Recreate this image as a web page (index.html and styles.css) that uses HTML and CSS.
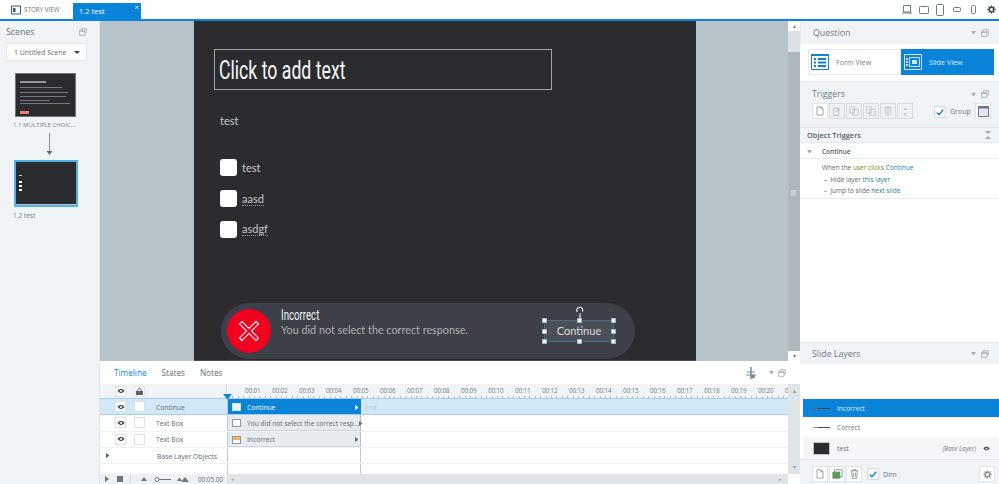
FILE: index.html
```html
<!DOCTYPE html>
<html lang="en">
<head>
<meta charset="utf-8">
<title>Story</title>
<link rel="stylesheet" href="styles.css">
</head>
<body>
<svg class="defs" width="0" height="0">
  <defs>
    <symbol id="float" viewBox="0 0 10 10"><path d="M3 2.500V.8h6.200v5.400H7.500M.8 2.800h6.700v6.400H.8zM.8 4.400h6.700" fill="none" stroke="currentColor"/></symbol>
    <symbol id="page" viewBox="0 0 12 14"><path d="M1.500.8h6l3 3v9.400h-9zM7.500.8v3h3" fill="none" stroke="currentColor"/></symbol>
    <symbol id="eye" viewBox="0 0 12 8"><path d="M.5 4Q6-2.500 11.500 4 6 10.500.5 4z" fill="currentColor"/><circle cx="6" cy="4" r="1.500" fill="#fff"/></symbol>
    <symbol id="trash" viewBox="0 0 12 14"><path d="M.5 2.500h11M4 2.500V1h4v1.500M2 3l.8 10h6.400L10 3M4.700 5v6M7.300 5v6" fill="none" stroke="currentColor"/></symbol>
    <symbol id="copy" viewBox="0 0 14 14"><path d="M1 1h6.500v9H1zM5 4.500h8V13H5z" fill="none" stroke="currentColor"/></symbol>
    <symbol id="gear" viewBox="0 0 12 12"><circle cx="6" cy="6" r="3" fill="none" stroke="currentColor" stroke-width="2"/><path d="M6 .5v2M6 9.500v2M.5 6h2M9.500 6h2M2.100 2.100l1.400 1.400M8.500 8.500l1.400 1.400M2.100 9.900l1.400-1.400M8.500 3.500l1.400-1.400" stroke="currentColor" stroke-width="1.700"/></symbol>
  </defs>
</svg>

<header class="topbar">
  <div class="tab-story">
    <svg class="tab-icon" viewBox="0 0 10 10"><path d="M.5 1h9v8h-9z" fill="#fff" stroke="#3d5a73"/><path d="M2 3h2.500v4H2z" fill="#3d5a73"/></svg>
    <span>STORY VIEW</span>
  </div>
  <div class="tab-active"><span>1.2 test</span><i class="tab-x">×</i></div>
  <div class="device-icons">
    <svg class="dev" width="10" height="9" viewBox="0 0 10 9"><path d="M1.500.5h7v6.500h-7zM0 8h10" fill="none" stroke="currentColor"/></svg>
    <svg class="dev" width="10" height="8" viewBox="0 0 10 8"><rect x=".5" y=".5" width="9" height="7" rx="1" fill="none" stroke="currentColor"/></svg>
    <svg class="dev" width="8" height="12" viewBox="0 0 8 12"><rect x=".5" y=".5" width="7" height="11" rx="1" fill="none" stroke="currentColor"/></svg>
    <svg class="dev gap9" width="8" height="5" viewBox="0 0 8 5"><rect x=".5" y=".5" width="7" height="4" rx="1" fill="none" stroke="currentColor"/></svg>
    <svg class="dev gap10" width="5" height="9" viewBox="0 0 5 9"><rect x=".5" y=".5" width="4" height="8" rx="1" fill="none" stroke="currentColor"/></svg>
    <svg class="dev gear-top" width="9" height="9"><use href="#gear"/></svg>
  </div>
</header>

<main class="workspace">
  <aside class="scenes">
    <div class="scenes-head"><span>Scenes</span><svg class="float" width="8" height="8"><use href="#float"/></svg></div>
    <div class="scene-select"><span>1 Untitled Scene</span><i class="caret"></i></div>
    <div class="thumb thumb-a">
      <i class="t-line t1"></i><i class="t-line t2"></i><i class="t-line t3"></i><i class="t-line t4"></i><i class="t-line t5"></i><i class="t-line t6"></i><i class="t-red"></i>
    </div>
    <div class="thumb-label">1.1 MULTIPLE CHOIC...</div>
    <svg class="thumb-arrow" width="7" height="22" viewBox="0 0 7 22"><path d="M3.500 0v19" stroke="#8a969b"/><path d="M.5 18h6l-3 4z" fill="#5e6a6f"/></svg>
    <div class="thumb-sel">
      <div class="thumb thumb-b"><i class="t-dot d0"></i><i class="t-box b1"></i><i class="t-box b2"></i><i class="t-box b3"></i></div>
    </div>
    <div class="thumb-label">1.2 test</div>
  </aside>

  <section class="center">
    <div class="stage-row">
      <div class="stage">
        <div class="slide">
          <div class="title-box"><span class="narrow">Click to add text</span></div>
          <div class="slide-text q-text">test</div>
          <div class="check c1"></div><div class="slide-text l1">test</div>
          <div class="check c2"></div><div class="slide-text l2 squiggle">aasd</div>
          <div class="check c3"></div><div class="slide-text l3 squiggle">asdgf</div>
          <div class="banner">
            <div class="red-circle">
              <svg width="22" height="22" viewBox="0 0 22 22"><path d="M4 1.500 11 8.500l7-7L20.500 4l-7 7 7 7-2.500 2.500-7-7-7 7L1.500 18l7-7-7-7z" fill="#f2001f" stroke="#fff" stroke-width="1.300" stroke-dasharray="2 .4"/></svg>
            </div>
            <div class="banner-text">
              <div class="banner-title">Incorrect</div>
              <div class="banner-sub">You did not select the correct response.</div>
            </div>
            <div class="cont-btn">Continue
              <i class="h h1"></i><i class="h h2"></i><i class="h h3"></i><i class="h h4"></i><i class="h h5"></i><i class="h h6"></i><i class="h h7"></i><i class="h h8"></i>
              <svg class="rotate" width="10" height="12" viewBox="0 0 10 12"><path d="M5 12V7.500M2.300 6A3 3 0 1 1 7.500 5.500" fill="none" stroke="#fff" stroke-width="1.100"/></svg>
            </div>
          </div>
        </div>
      </div>
      <div class="vscroll">
        <div class="arrow-cell">▴</div>
        <div class="vthumb"></div>
        <div class="vmid"><i class="grip"></i></div>
        <div class="arrow-cell">▾</div>
      </div>
    </div>

    <div class="timeline">
      <div class="tl-tabs">
        <span class="tl-tab on">Timeline</span><span class="tl-tab">States</span><span class="tl-tab">Notes</span>
        <span class="tl-tools">
          <svg width="12" height="12" viewBox="0 0 12 12"><path d="M6 0v12" stroke="#3f6f9c" stroke-width="1.200"/><path d="M2 5h8M1 8h10" stroke="#7c8a94"/><circle cx="8" cy="9.500" r="2" fill="#7c8a94"/></svg>
          <i class="tool-caret"></i>
          <svg class="float" width="8" height="8"><use href="#float"/></svg>
        </span>
      </div>
      <div class="tl-body">
        <div class="tl-main">
          <div class="tl-ruler">
            <div class="ruler-left">
              <span class="cellbtn"><svg width="8" height="6"><use href="#eye"/></svg></span>
              <span class="cellbtn lockbtn"><svg width="7" height="7" viewBox="0 0 7 7"><path d="M0 3h7v4H0z" fill="#5a6266"/><path d="M1.800 3V1.700Q1.800.5 3.500.5T5.200 1.700V3" fill="none" stroke="#5a6266"/></svg></span>
            </div>
            <div class="ruler-scale">
              <span>00:01</span><span>00:02</span><span>00:03</span><span>00:04</span><span>00:05</span><span>00:06</span><span>00:07</span><span>00:08</span><span>00:09</span><span>00:10</span><span>00:11</span><span>00:12</span><span>00:13</span><span>00:14</span><span>00:15</span><span>00:16</span><span>00:17</span><span>00:18</span><span>00:19</span><span>00:20</span><span class="clip">0</span>
            </div>
            <i class="playhead"></i>
          </div>
          <div class="tl-row sel">
            <div class="row-left"><span class="cellbtn"><svg width="8" height="6"><use href="#eye"/></svg></span><span class="cellbox"></span><span class="row-name">Continue</span></div>
            <div class="row-track"><div class="block on"><i class="blk-ico ico-btn"></i><span>Continue</span><i class="blk-arrow"></i></div><span class="end">End</span></div>
          </div>
          <div class="tl-row">
            <div class="row-left"><span class="cellbtn"><svg width="8" height="6"><use href="#eye"/></svg></span><span class="cellbox"></span><span class="row-name">Text Box</span></div>
            <div class="row-track"><div class="block"><i class="blk-ico ico-txt"></i><span>You did not select the correct resp...</span><i class="blk-arrow"></i></div></div>
          </div>
          <div class="tl-row">
            <div class="row-left"><span class="cellbtn"><svg width="8" height="6"><use href="#eye"/></svg></span><span class="cellbox"></span><span class="row-name">Text Box</span></div>
            <div class="row-track"><div class="block"><i class="blk-ico ico-box"></i><span>Incorrect</span><i class="blk-arrow"></i></div></div>
          </div>
          <div class="tl-row base">
            <div class="row-left"><i class="base-arrow"></i><span class="row-name">Base Layer Objects</span></div>
            <div class="row-track"><div class="block-fill"></div></div>
          </div>
          <div class="tl-spacer">
            <div class="spacer-left"></div>
            <div class="row-track"><div class="block-fill"></div></div>
          </div>
          <div class="tl-foot">
            <div class="foot-left">
              <i class="play"></i><i class="stop"></i><i class="sep"></i>
              <i class="mtn m1"></i>
              <svg class="slider" width="17" height="5" viewBox="0 0 17 5"><path d="M5 2.500h12" stroke="#6d777c"/><circle cx="3" cy="2.500" r="2" fill="#fff" stroke="#6d777c"/></svg>
              <i class="mtn m2"></i><i class="mtn m3"></i>
              <span class="foot-time">00:05.00</span>
            </div>
            <div class="foot-scroll"><i class="f-l">◂</i><i class="f-r">▸</i></div>
          </div>
        </div>
        <div class="tl-vscroll"><span>▴</span><span>▾</span></div>
      </div>
    </div>
  </section>

  <aside class="props">
    <div class="p-head q-head"><span>Question</span><i class="tool-caret"></i><svg class="float" width="8" height="8"><use href="#float"/></svg></div>
    <div class="views">
      <div class="view-btn">
        <svg width="18" height="16" viewBox="0 0 18 16"><path d="M.5.5h17v15H.5z" fill="#fff" stroke="#0a84d8"/><path d="M0 0h18v2H0zM3 4h2v2H3zM7 4h8v2H7zM3 7.500h2v2H3zM7 7.500h8v2H7zM3 11h2v2H3zM7 11h8v2H7z" fill="#0a84d8"/></svg>
        <span>Form View</span>
      </div>
      <div class="view-btn on">
        <svg width="18" height="16" viewBox="0 0 18 16"><path d="M.5.5h17v15H.5zM5.500 3.500h10v9h-10z" fill="none" stroke="#cfe7f8"/><path d="M2 4h2v2H2zM2 7h2v2H2zM2 10h2v2H2zM8 6h5v4H8z" fill="#cfe7f8"/></svg>
        <span>Slide View</span>
      </div>
    </div>
    <div class="p-head t-head"><span>Triggers</span><i class="tool-caret"></i><svg class="float" width="8" height="8"><use href="#float"/></svg></div>
    <div class="trig-tools">
      <span class="ibtn"><svg width="8" height="10"><use href="#page"/></svg></span>
      <span class="ibtn dis"><svg width="8" height="9" viewBox="0 0 9 10"><path d="M.5 1.500h6v8h-6zM3 6l4.500-5" fill="none" stroke="currentColor"/></svg></span>
      <span class="ibtn dis"><svg width="10" height="10"><use href="#copy"/></svg></span>
      <span class="ibtn dis"><svg width="10" height="10"><use href="#copy"/></svg></span>
      <span class="ibtn dis"><svg width="8" height="10"><use href="#trash"/></svg></span>
      <span class="ibtn dis updown"><i>▴</i><i>▾</i></span>
      <span class="check-small"><svg width="8" height="7" viewBox="0 0 8 7"><path d="M.8 3.500 3 5.800 7.200.8" fill="none" stroke="#0a84d8" stroke-width="1.400"/></svg></span>
      <span class="group-label">Group</span>
      <span class="ibtn var"><svg width="11" height="11" viewBox="0 0 11 11"><path d="M.5.5h10v10H.500z" fill="#dfe8f0" stroke="#6b7780"/><path d="M0 0h11v2.500H0z" fill="#6b7780"/></svg></span>
    </div>
    <div class="ot-head"><span>Object Triggers</span><svg width="6" height="8" viewBox="0 0 6 8"><path d="M0 0h6L3 3zM0 8h6L3 5z" fill="#a0aaaf"/></svg></div>
    <div class="ot-group"><i class="tool-caret"></i><span>Continue</span></div>
    <div class="ot-list">
      <div class="ot-line">When the <span class="k-o">user</span> <span class="k-o">clicks</span> <span class="k-b">Continue</span></div>
      <div class="ot-line sub"><i>–</i><span>Hide layer <span class="k-b">this layer</span></span></div>
      <div class="ot-line sub"><i>–</i><span>Jump to slide <span class="k-b">next slide</span></span></div>
    </div>
    <div class="p-fill"></div>
    <div class="p-head l-head"><span>Slide Layers</span><i class="tool-caret"></i><svg class="float" width="8" height="8"><use href="#float"/></svg></div>
    <div class="l-blank"></div>
    <div class="layer on"><i class="ln red"></i><span>Incorrect</span></div>
    <div class="layer second"><i class="ln green"></i><span>Correct</span></div>
    <div class="layer base-layer"><i class="mini"></i><span>test</span><em>(Base Layer)</em><svg width="7" height="5"><use href="#eye"/></svg></div>
    <div class="l-tools">
      <span class="ibtn"><svg width="8" height="10"><use href="#page"/></svg></span>
      <span class="ibtn dup"><svg width="11" height="10" viewBox="0 0 14 13"><path d="M3 1h10v9H3z" fill="none" stroke="#6b7780"/><path d="M1 4h9v8H1z" fill="#55a54a" stroke="#6b7780"/></svg></span>
      <span class="ibtn"><svg width="9" height="10"><use href="#trash"/></svg></span>
      <span class="check-small"><svg width="8" height="7" viewBox="0 0 8 7"><path d="M.8 3.500 3 5.800 7.200.8" fill="none" stroke="#0a84d8" stroke-width="1.400"/></svg></span>
      <span class="dim-label">Dim</span>
      <span class="ibtn gear-btn"><svg width="9" height="9"><use href="#gear"/></svg></span>
    </div>
  </aside>
</main>
</body>
</html>
```

FILE: styles.css
```css
* { box-sizing: border-box; }
html, body { margin: 0; height: 100%; overflow: hidden; }
body {
  width: 999px; height: 484px; display: flex; flex-direction: column;
  font-family: "Open Sans", "Noto Sans", sans-serif; font-size: 7px; color: #5d676c; background: #fff;
}
i { font-style: normal; display: block; }
.defs { position: absolute; }

/* top bar */
.topbar { height: 21px; flex: none; display: flex; align-items: stretch; border-bottom: 2px solid #0a84d8; background: #fff; }
.tab-story { width: 73px; padding-left: 11px; display: flex; align-items: center; gap: 3px; font-size: 6.300px; color: #6c767b; }
.tab-icon { width: 10px; height: 10px; }
.tab-active { width: 68px; position: relative; background: #0a84d8; color: #fff; display: flex; align-items: center; padding-left: 6px; font-size: 7.500px; margin-top: 3px; }
.tab-x { position: absolute; right: 2px; top: -2px; font-size: 8px; color: #dceefb; }
.device-icons { margin-left: auto; display: flex; align-items: center; gap: 7px; padding-right: 3px; color: #6f7a80; }
.dev { flex: none; }
.gap9 { margin-left: 2px; }
.gap10 { margin-left: 3px; }
.gear-top { color: #3d4a52; margin-left: 4px; }

.workspace { flex: 1; display: flex; min-height: 0; }

/* scenes */
.scenes { width: 100px; flex: none; background: #f1f4f7; border-right: 1px solid #dfe4e8; padding: 0 6px; display: flex; flex-direction: column; }
.scenes-head { height: 21px; display: flex; align-items: center; justify-content: space-between; font-size: 8.800px; color: #66737a; padding-right: 6px; }
.float { color: #a2acb1; flex: none; }
.scene-select { width: 81px; height: 18px; background: #fff; border: 1px solid #e2e6e9; display: flex; align-items: center; justify-content: space-between; padding: 0 6px 0 7px; color: #626d72; font-size: 6.900px; margin-top: 1px; }
.caret { width: 6px; height: 0; border: 3px solid transparent; border-top: 3px solid #3f474b; border-bottom: 0; }
.thumb { background: #2b2c30; position: relative; }
.thumb-a { width: 61px; height: 44px; margin: 12px 0 0 9px; border: 1px solid #6f7478; flex: none; }
.t-line { position: absolute; height: 1px; background: #aab; opacity: .6; }
.t1 { left: 4px; top: 7px; width: 26px; height: 2px; background: #ddd; }
.t2 { left: 4px; top: 13px; width: 42px; }
.t3 { left: 4px; top: 18px; width: 48px; }
.t4 { left: 4px; top: 22px; width: 46px; }
.t5 { left: 4px; top: 26px; width: 30px; }
.t6 { left: 4px; top: 29px; width: 50px; }
.t-red { position: absolute; left: 4px; top: 37px; width: 9px; height: 3px; background: #f47a75; }
.thumb-label { font-size: 6px; line-height: 10px; color: #757f84; margin: 3px 0 0 7px; white-space: nowrap; }
.thumb-arrow { margin: 3px 0 0 40px; flex: none; }
.thumb-sel { width: 64px; height: 47px; margin: 5px 0 0 8px; border: 2px solid #4fb3ea; background: #bfc4c7; padding: 0 0 1px; flex: none; }
.thumb-sel + .thumb-label { margin-top: 4px; font-size: 6.500px; }
.thumb-b { width: 100%; height: 100%; }
.t-dot { position: absolute; left: 3px; top: 13px; width: 3px; height: 1px; background: #ccc; }
.t-box { position: absolute; left: 3px; width: 3px; height: 2px; background: #fff; }
.b1 { top: 19px; } .b2 { top: 23px; } .b3 { top: 27px; }

/* center */
.center { width: 700px; flex: none; display: flex; flex-direction: column; }
.stage-row { height: 340px; flex: none; display: flex; }
.stage { width: 688px; flex: none; background: #b7c2c9; padding-left: 94px; }
.slide { width: 502px; height: 340px; background: #2b2c30; border-bottom: 1px solid #4a4f55; position: relative; font-family: Lato, sans-serif; }
.title-box { position: absolute; left: 20px; top: 28px; width: 338px; height: 41px; border: 1px solid #a4a6a8; color: #f8f8f8; font-family: Roboto, sans-serif; font-size: 26px; line-height: 40px; padding-left: 4px; }
.narrow { display: inline-block; transform: scaleX(.68); transform-origin: left center; white-space: nowrap; }
.slide-text { position: absolute; font-size: 11px; color: #c9c9cb; line-height: 15px; }
.q-text { left: 26px; top: 92px; }
.check { position: absolute; left: 26px; width: 17px; height: 17px; background: #fff; border-radius: 3px; }
.c1 { top: 138px; } .c2 { top: 169px; } .c3 { top: 200px; }
.l1 { left: 48px; top: 139px; } .l2 { left: 48px; top: 171px; } .l3 { left: 48px; top: 201px; }
.squiggle { border-bottom: 1px dotted #9a9a9a; line-height: 13px; }
.banner { position: absolute; left: 27px; top: 282px; width: 414px; height: 56px; background: #3d4048; border-radius: 28px; display: flex; align-items: flex-start; }
.red-circle { width: 44px; height: 44px; margin: 6px 0 0 6px; border-radius: 50%; background: #f2001f; display: flex; align-items: center; justify-content: center; flex: none; }
.banner-text { margin: 4px 0 0 10px; width: 263px; flex: none; }
.banner-title { font-family: Roboto, sans-serif; font-size: 14px; color: #f2f2f2; line-height: 16px; transform: scaleX(.69); transform-origin: left center; white-space: nowrap; }
.banner-sub { font-size: 10.800px; color: #aeb0b3; line-height: 14px; }
.cont-btn { position: relative; width: 70px; height: 22px; margin-top: 17px; background: #4b4f58; border: 1px solid #4a6d85; color: #dcdcdc; font-size: 11px; text-align: center; line-height: 20px; flex: none; }
.h { position: absolute; width: 5px; height: 5px; background: #fff; border: 1px solid #9fb2bf; }
.h1 { left: -3px; top: -3px; } .h2 { left: 32px; top: -3px; } .h3 { right: -3px; top: -3px; }
.h4 { left: -3px; top: 8px; } .h5 { right: -3px; top: 8px; }
.h6 { left: -3px; bottom: -3px; } .h7 { left: 32px; bottom: -3px; } .h8 { right: -3px; bottom: -3px; }
.rotate { position: absolute; left: 30px; top: -15px; }

.vscroll { width: 12px; flex: none; background: #aeb7bc; display: flex; flex-direction: column; }
.arrow-cell { height: 10px; background: #fff; color: #7a8388; font-size: 6px; line-height: 10px; text-align: center; flex: none; }
.vthumb { height: 21px; background: #dbe1e4; flex: none; }
.vmid { flex: 1; position: relative; }
.grip { position: absolute; left: 3px; top: 138px; width: 5px; height: 6px; background: #c9d0d4; }

/* timeline */
.timeline { flex: 1; display: flex; flex-direction: column; background: #fff; min-height: 0; }
.tl-tabs { height: 23px; flex: none; display: flex; align-items: center; padding-left: 14px; gap: 15px; font-size: 8.200px; color: #626d72; padding-right: 14px; }
.tl-tab.on { color: #0a84d8; }
.tl-tools { margin-left: auto; display: flex; align-items: center; gap: 12px; }
.tool-caret { width: 5px; height: 0; border: 2.500px solid transparent; border-top: 3px solid #a4aeb3; border-bottom: 0; flex: none; }
.tl-tools .tool-caret { margin-right: -8px; }
.tl-body { flex: 1; display: flex; min-height: 0; }
.tl-main { width: 688px; flex: none; display: flex; flex-direction: column; }
.tl-ruler { height: 15px; flex: none; display: flex; position: relative; background: #f1f4f7; border-bottom: 1px solid #a9cde6; }
.ruler-left { width: 127px; flex: none; display: flex; align-items: center; padding-left: 15px; gap: 8px; border-right: 1px solid #d5dadd; }
.cellbtn { width: 11px; height: 11px; background: #fff; border: 1px solid #dde2e5; color: #4d565b; display: flex; align-items: center; justify-content: center; flex: none; }
.ruler-scale { flex: 1; display: flex; overflow: hidden; font-size: 6.300px; color: #747e83; padding-left: 18px;
  background: repeating-linear-gradient(90deg, #b6bdc1 0 1px, transparent 1px 5.400px) 0 100% / 100% 2px no-repeat; }
.ruler-scale span { width: 27px; flex: none; text-align: left; line-height: 14px; letter-spacing: -.1px; }
.ruler-scale .clip { width: 3px; }
.playhead { position: absolute; left: 122.500px; bottom: -1px; width: 9px; height: 0; border: 4.500px solid transparent; border-top: 5px solid #0a84d8; border-bottom: 0; }
.tl-row { height: 16.300px; flex: none; display: flex; border-bottom: 1px solid #f0f2f4; }
.row-left { width: 127px; flex: none; display: flex; align-items: center; padding-left: 15px; }
.row-left .cellbox { width: 11px; height: 11px; background: #fff; border: 1px solid #dde2e5; margin-left: 8px; flex: none; }
.row-name { margin-left: 11px; padding-top: 1px; color: #626d72; font-size: 6.800px; white-space: nowrap; }
.tl-row.sel { background: #d3e8f7; border-bottom: 1px solid #a9cde6; }
.tl-row.base .row-name { margin-left: 48px; }
.base-arrow { margin-left: -9px; width: 3px; border: 2.500px solid transparent; border-left: 3px solid #5b6468; border-right: 0; height: 5px; }
.row-track { flex: 1; position: relative; display: flex; align-items: stretch; }
.block { width: 134px; background: #e6ebef; border-left: 1px solid #a6d0ee; border-right: 1px solid #b5bec3; display: flex; align-items: center; padding: 1px 2px 0 4px; color: #5f6a6f; font-size: 6.700px; white-space: nowrap; box-shadow: inset 0 -1px #cfd6da; }
.block.on { background: #0a84d8; color: #fff; box-shadow: none; border-right-color: #0a84d8; }
.block span { flex: 1; margin-left: 6px; }
.blk-ico { width: 9px; height: 8px; flex: none; border: 1px solid #8a979e; background: #fff; }
.block.on .blk-ico { border-color: #cfe7f8; background: #eaf5fc; }
.ico-box { background: linear-gradient(#f4b25a 0 3px, #fff 3px); }
.blk-arrow { width: 3px; height: 5px; border: 2.500px solid transparent; border-left: 3px solid #6a7479; border-right: 0; flex: none; }
.block.on .blk-arrow { border-left-color: #fff; }
.end { color: #b3cbdb; font-size: 6.500px; margin: 1px 0 0 4px; align-self: center; }
.block-fill { width: 134px; border-left: 1px solid #a6d0ee; border-right: 1px solid #c3cbcf; }
.tl-spacer { flex: 1; display: flex; min-height: 0; }
.spacer-left { width: 127px; flex: none; }
.tl-foot { height: 10px; flex: none; display: flex; background: #eef1f3; }
.foot-left { width: 127px; flex: none; display: flex; align-items: center; padding-left: 5px; color: #626d72; font-size: 6.300px; }
.play { width: 4px; height: 6px; border: 3px solid transparent; border-left: 4px solid #6d777c; border-right: 0; }
.stop { width: 6px; height: 6px; background: #6d777c; margin-left: 8px; }
.sep { width: 1px; height: 8px; background: #d3d9dc; margin-left: 7px; }
.mtn { width: 6px; height: 4px; border: 3px solid transparent; border-bottom: 4px solid #6d777c; border-top: 0; }
.m1 { margin-left: 10px; }
.slider { margin-left: 7px; flex: none; }
.m2 { width: 5px; height: 3px; border-width: 0 2.500px 3px; margin-left: 6px; }
.m3 { width: 8px; height: 5px; border-width: 0 4px 5px; margin-left: -1px; }
.foot-time { margin-left: 9px; white-space: nowrap; }
.foot-scroll { flex: 1; background: #e1e5e8; display: flex; justify-content: space-between; padding: 0 6px 0 4px; color: #9aa3a8; font-size: 5px; line-height: 10px; }
.tl-vscroll { width: 12px; flex: none; background: #dfe4e7; display: flex; flex-direction: column; justify-content: space-between; align-items: center; color: #8a9499; font-size: 6px; padding: 3px 0; margin-bottom: 10px; }

/* right panel */
.props { flex: 1; min-width: 0; background: #fff; display: flex; flex-direction: column; }
.p-head { display: flex; align-items: center; font-size: 8.800px; color: #6e7a80; background: #f1f4f7; padding: 0 10px 0 12px; flex: none; }
.p-head span { flex: 1; }
.p-head .tool-caret { margin-right: 5px; }
.q-head { height: 23px; border-left: 1px solid #e8ecef; }
.views { display: flex; height: 37px; padding: 5px 5px 6px 8px; flex: none; background: #fff; }
.view-btn { width: 93px; height: 26px; display: flex; align-items: center; gap: 7px; padding-left: 2px; border: 1px solid #e6eaed; font-size: 7.200px; color: #788287; }
.view-btn.on { background: #0a84d8; border-color: #0a84d8; color: #dff0fb; }
.t-head { height: 22px; padding-top: 3px; border-top: 1px solid #e4e8eb; }
.trig-tools { height: 24px; background: #f1f4f7; display: flex; align-items: flex-start; padding: 0 8px 0 12px; gap: 1px; flex: none; }
.ibtn { width: 16px; height: 16px; background: #fff; border: 1px solid #dfe4e7; display: flex; align-items: center; justify-content: center; color: #6e787d; flex: none; }
.ibtn.dis { background: #eef1f3; border-color: #d6dbde; color: #b5bdc1; }
.updown { flex-direction: column; font-size: 5px; line-height: 6px; }
.check-small { width: 12px; height: 12px; background: #fff; border: 1px solid #d5dadd; display: flex; align-items: center; justify-content: center; flex: none; margin: 3px 0 0 20px; }
.group-label { margin: 3px 0 0 3px; font-size: 7px; line-height: 12px; color: #6e787d; }
.var { margin-left: auto; }
.ot-head { height: 16px; background: #f1f4f7; border-top: 1px solid #e4e8eb; border-bottom: 1px solid #e4e8eb; display: flex; align-items: center; justify-content: space-between; padding: 0 8px 0 7px; font-size: 7.400px; font-weight: 600; color: #56626a; flex: none; }
.ot-group { height: 16px; display: flex; align-items: center; padding: 1px 0 0 7px; gap: 10px; font-size: 6.500px; font-weight: 600; color: #56626a; border-bottom: 1px solid #e9ecef; flex: none; }
.ot-list { padding: 3px 0 3px 22px; border-bottom: 1px solid #e9ecef; height: 40px; flex: none; }
.ot-line { font-size: 6.500px; line-height: 11.700px; color: #5f6a6f; white-space: nowrap; }
.ot-line.sub { padding-left: 2px; display: flex; gap: 3px; }
.k-o { color: #7a8a1e; }
.k-b { color: #1f7fa8; }
.p-fill { flex: 1; min-height: 0; }
.l-head { height: 22px; border-top: 1px solid #e4e8eb; }
.l-blank { height: 35px; flex: none; }
.layer { height: 18px; margin-left: 3px; display: flex; align-items: center; padding-left: 10px; gap: 7px; color: #6a747a; font-size: 6.700px; flex: none; }
.layer.on { background: #0a84d8; color: #dff0fb; }
.layer.second { margin-top: 1px; }
.ln { width: 17px; height: 1px; background: #4a4f55; flex: none; }
.ln.red { background: linear-gradient(90deg, #d8342e 0 5px, #3c4a55 5px); }
.ln.green { background: linear-gradient(90deg, #7db84a 0 5px, #4a4f55 5px); }
.base-layer { height: 22px; margin: 1px 0 0 3px; background: #f4f6f8; padding-right: 9px; }
.mini { width: 17px; height: 13px; background: #2b2c30; flex: none; border: 1px solid #bfc4c7; }
.base-layer em { margin-left: auto; font-size: 6.300px; color: #727c81; }
.base-layer svg { color: #4d565b; margin-left: 0; flex: none; }
.l-tools { height: 25px; flex: none; background: #f1f4f7; border-top: 1px solid #e4e8eb; display: flex; align-items: center; padding: 4px 0 0 12px; gap: 1px; }
.l-tools .check-small { margin: 0 0 0 4px; }
.dim-label { margin-left: 3px; font-size: 7.200px; color: #6e787d; }
.gear-btn { margin-left: auto; margin-right: 4px; color: #8a9499; }
```
